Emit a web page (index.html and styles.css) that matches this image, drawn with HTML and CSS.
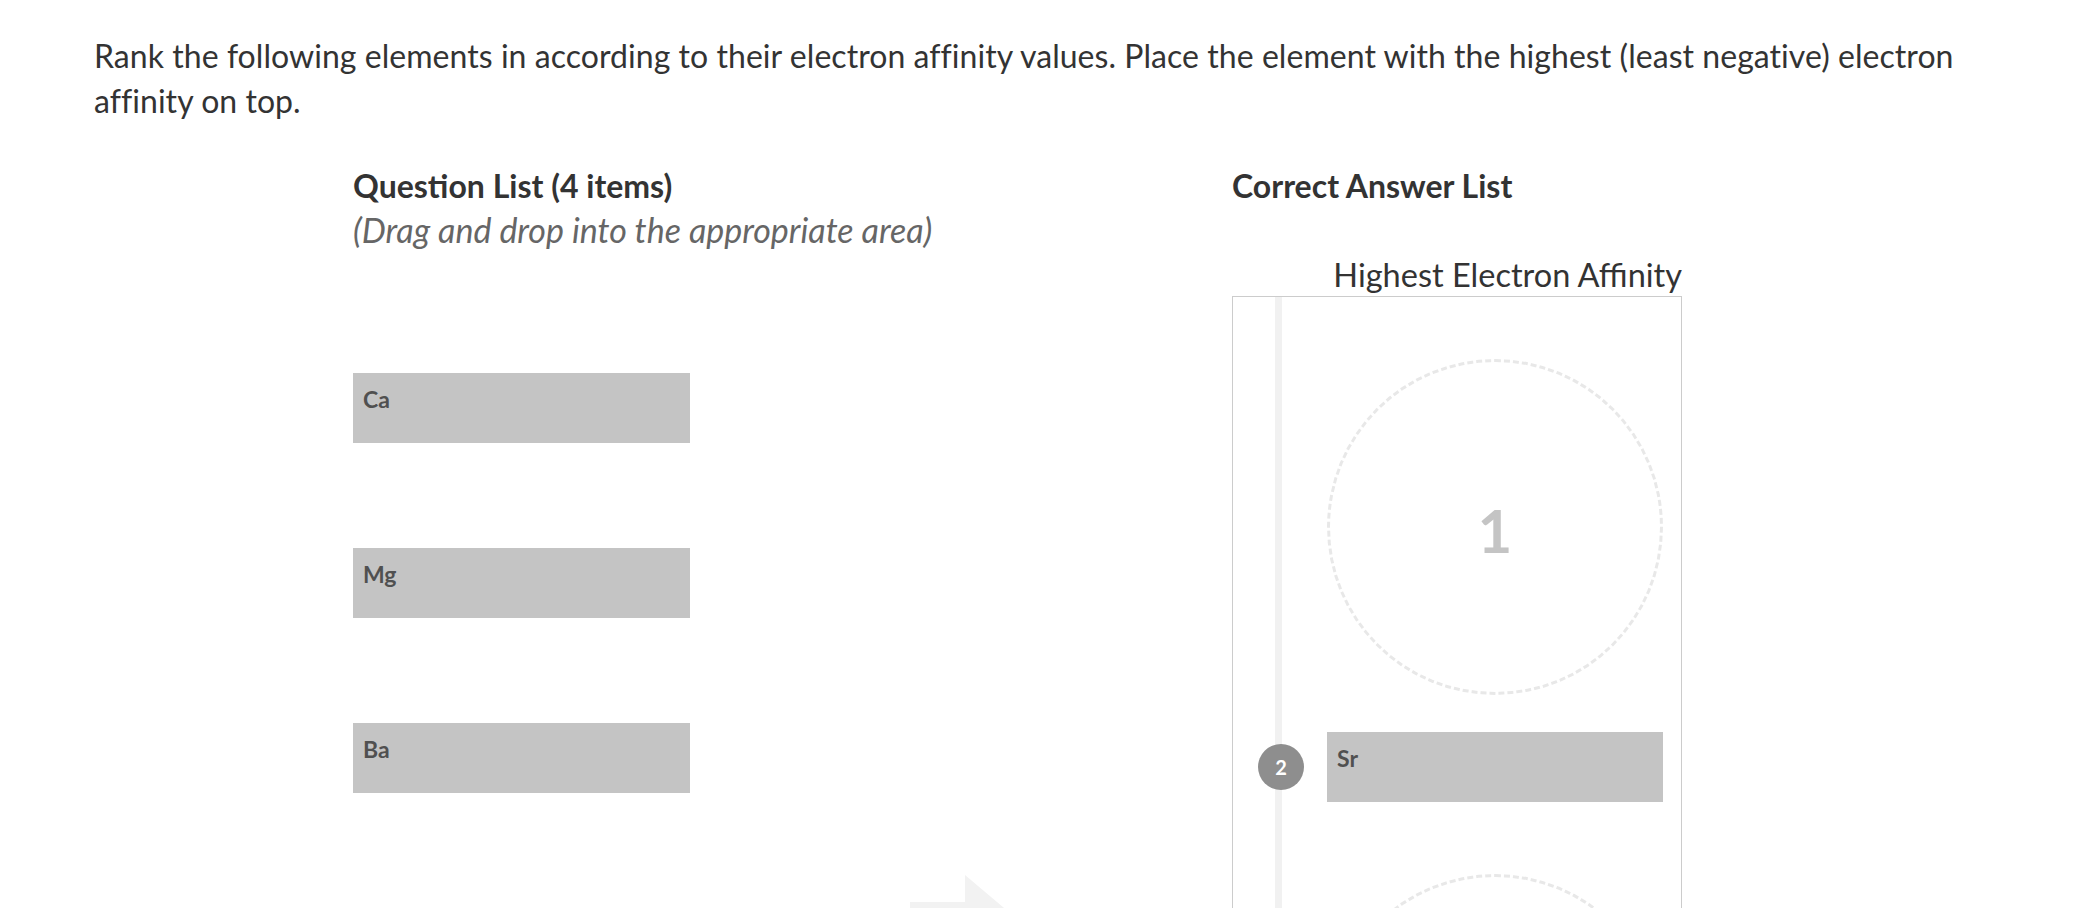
FILE: index.html
```html
<!DOCTYPE html>
<html lang="en">
<head>
<meta charset="utf-8">
<title>Ranking question</title>
<link rel="stylesheet" href="styles.css">
</head>
<body>
<main class="page">
  <p class="prompt">Rank the following elements in according to their electron affinity values. Place the element with the highest (least negative) electron affinity on top.</p>
  <div class="columns">
    <section class="question-col">
      <h2 class="col-title">Question List (4 items)</h2>
      <p class="col-hint">(Drag and drop into the appropriate area)</p>
      <ul class="q-list">
        <li class="item">Ca</li>
        <li class="item">Mg</li>
        <li class="item">Ba</li>
      </ul>
    </section>
    <div class="arrow-col">
      <svg class="arrow" width="126" height="120" viewBox="0 0 126 120" aria-hidden="true">
        <rect x="0" y="27" width="56" height="66" fill="#f2f2f2"/>
        <polygon points="55,0 126,60 55,120" fill="#f2f2f2"/>
      </svg>
    </div>
    <section class="answer-col">
      <h2 class="col-title">Correct Answer List</h2>
      <p class="answer-caption">Highest Electron Affinity</p>
      <div class="answer-box">
        <div class="slot">
          <div class="rail-cell"></div>
          <div class="drop-circle"><span>1</span></div>
        </div>
        <div class="slot slot-filled">
          <div class="rail-cell"><span class="badge">2</span></div>
          <div class="item">Sr</div>
        </div>
        <div class="slot">
          <div class="rail-cell"></div>
          <div class="drop-circle"><span>3</span></div>
        </div>
      </div>
    </section>
  </div>
</main>
</body>
</html>
```
FILE: styles.css
```css
html, body {
  margin: 0;
  padding: 0;
  background: #ffffff;
}

body {
  font-family: Lato, "Open Sans", "Liberation Sans", sans-serif;
  color: #333333;
  overflow: hidden;
}

.page {
  padding: 33px 94px 0 94px;
}

.prompt {
  margin: 0;
  font-size: 32px;
  line-height: 45px;
  letter-spacing: 0.05px;
  color: #333333;
}

.columns {
  display: grid;
  grid-template-columns: 520px 359px 450px;
  margin-top: 44px;
  padding-left: 259px;
}

.col-title {
  margin: 0;
  font-size: 32px;
  line-height: 38px;
  font-weight: 700;
  color: #333333;
}

.col-hint {
  margin: 6px 0 0 0;
  font-size: 34px;
  line-height: 38px;
  font-style: italic;
  color: #666666;
  white-space: nowrap;
}

.q-list {
  list-style: none;
  margin: 124px 0 0 0;
  padding: 0;
  display: flex;
  flex-direction: column;
  gap: 105px;
}

.item {
  box-sizing: border-box;
  width: 337px;
  height: 70px;
  padding: 13px 10px;
  background: #c4c4c4;
  font-size: 23px;
  line-height: 27.6px;
  font-weight: 700;
  color: #505050;
}

.arrow-col {
  padding: 708px 0 0 37px;
}

.arrow {
  display: block;
}

.answer-caption {
  margin: 50px 0 0 0;
  font-size: 32.5px;
  line-height: 39px;
  text-align: right;
  color: #333333;
}

.answer-box {
  margin-top: 2px;
  border: 1px solid #cccccc;
  padding: 62px 18px 40px 0;
  background: linear-gradient(to right, transparent 42px, #f1f1f1 42px, #f1f1f1 49px, transparent 49px);
  display: flex;
  flex-direction: column;
  gap: 37px;
}

.slot {
  display: grid;
  grid-template-columns: 94px 336px;
  align-items: center;
}

.slot-filled {
  margin-bottom: 35px;
}

.slot .item {
  width: 336px;
}

.rail-cell {
  display: flex;
  justify-content: center;
}

.badge {
  width: 46px;
  height: 46px;
  border-radius: 50%;
  background: #8e8e8e;
  color: #ffffff;
  font-weight: 700;
  font-size: 20px;
  display: flex;
  align-items: center;
  justify-content: center;
  margin-left: 2px;
}

.drop-circle {
  box-sizing: border-box;
  width: 336px;
  height: 336px;
  border-radius: 50%;
  border: 3px dashed #e8e8e8;
  display: flex;
  align-items: center;
  justify-content: center;
  font-size: 60px;
  font-weight: 700;
  color: #c4c4c4;
  padding-top: 6px;
}
```
